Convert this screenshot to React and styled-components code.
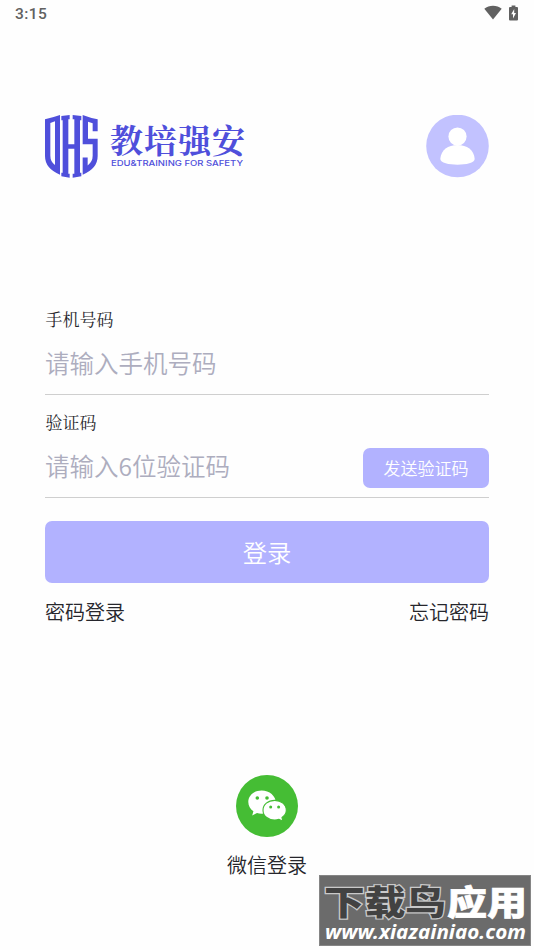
import React from 'react';
import styled, { createGlobalStyle } from 'styled-components';

const GlobalStyle = createGlobalStyle`
  * {
    box-sizing: border-box;
  }

  body {
    margin: 0;
    background: #fefefe;
    font-family: Roboto, "Noto Sans CJK SC", sans-serif;
    color: #26262c;
  }
`;

const WifiIcon = () => (
  <svg width="18" height="15" viewBox="0 0 18 15">
    <path d="M0.3 3.8 C5 -0.2 13 -0.2 17.7 3.8 L9 14.6 Z" fill="#616161" />
  </svg>
);

const BatteryIcon = () => (
  <svg width="9" height="16" viewBox="0 0 9 16">
    <path d="M2.6 0.4 H6.4 V2 H8 Q9 2 9 3 V14.5 Q9 15.5 8 15.5 H1 Q0 15.5 0 14.5 V3 Q0 2 1 2 H2.6 Z" fill="#616161" />
    <path d="M5.2 4 L2.2 9.2 H4 V13.5 L7 8 H5.2 Z" fill="#fff" />
  </svg>
);

const ShieldLogo = () => (
  <svg width="53" height="63" viewBox="30 28 159 190" preserveAspectRatio="none" fill="#4f4fdb">
    <path
      fillRule="evenodd"
      d="M30 41 Q52 36 75 28 V208 Q30 190 30 152 Z M46 52 V151 Q46 169 60 179 V47 Z"
    />
    <path d="M79 31 L104 28 V41 H100 V116 H118 V41 H113 V28 L139 31 V44 H135 V202 H139 V213 L113 217 V205 H118 V130 H100 V205 H104 V217 L79 213 V202 H83 V44 H79 Z" />
    <path d="M143 28 Q166 37 188 41 V77 H173 V53 L159 48 V100 H188 V152 Q188 190 143 208 V156 H158 V180 Q173 169 173 151 V116 H143 Z" />
  </svg>
);

const UserIcon = () => (
  <svg width="63" height="63" viewBox="0 0 63 63">
    <circle cx="31.5" cy="31" r="31.3" fill="#c2c2ff" />
    <circle cx="31.5" cy="21.5" r="9.1" fill="#fff" />
    <path d="M14.3 44 C15 35 22 30.1 31.5 30.1 C41 30.1 48 35 48.7 44 C48.7 51.6 14.3 51.6 14.3 44 Z" fill="#fff" />
  </svg>
);

const WechatIcon = () => (
  <svg width="62" height="62" viewBox="0 0 62 62">
    <circle cx="31" cy="31" r="31" fill="#45bd34" />
    <path d="M25.6 15.5 C18 15.5 12.3 20.5 12.3 27 C12.3 31 14.3 34.1 17.4 36.3 L16.2 40.4 L21 38 Q24 39 28 38.5 L40 28 C39.7 20.8 33.5 15.5 25.6 15.5 Z" fill="#fff" />
    <path d="M38.7 25.4 C32 25.4 27 29.6 27 35.2 C27 40.9 32 45.1 38.7 45.1 Q40.7 45.1 43 44.4 L46.8 46.2 L46 42.5 C48.6 40.7 50.3 38.3 50.3 35.2 C50.3 29.6 45.2 25.4 38.7 25.4 Z" fill="#fff" stroke="#45bd34" strokeWidth="1.1" />
    <g fill="#45bd34">
      <circle cx="21.3" cy="23" r="1.8" />
      <circle cx="31" cy="23" r="1.8" />
      <circle cx="34.7" cy="32" r="1.5" />
      <circle cx="42.6" cy="32" r="1.5" />
    </g>
  </svg>
);

const App = () => {
  return (
    <>
      <GlobalStyle />
      <Screen>
        <StatusBar>
          <Time>3:15</Time>
          <StatusIcons>
            <WifiIcon />
            <BatteryIcon />
          </StatusIcons>
        </StatusBar>
        <Header>
          <Brand>
            <ShieldLogo />
            <BrandText>
              <BrandName>教培强安</BrandName>
              <Slogan viewBox="0 0 134 10">
                <text x="1" y="7.8" textLength="132" lengthAdjust="spacingAndGlyphs">
                  EDU&amp;TRAINING FOR SAFETY
                </text>
              </Slogan>
            </BrandText>
          </Brand>
          <UserIcon />
        </Header>
        <Form>
          <Field>
            <Label>手机号码</Label>
            <InputRow>
              <Input type="tel" placeholder="请输入手机号码" />
            </InputRow>
          </Field>
          <Field>
            <Label>验证码</Label>
            <InputRow>
              <Input placeholder="请输入6位验证码" />
              <SendButton type="button">发送验证码</SendButton>
            </InputRow>
          </Field>
          <LoginButton type="button">登录</LoginButton>
          <Links>
            <TextLink>密码登录</TextLink>
            <TextLink>忘记密码</TextLink>
          </Links>
        </Form>
        <Wechat>
          <WechatIcon />
          <TextLink>微信登录</TextLink>
        </Wechat>
        <Watermark>
          <svg width="212" height="71" viewBox="0 0 212 71">
            <WatermarkName x="5" y="40" textLength="122" lengthAdjust="spacingAndGlyphs" $dark>
              下载鸟
            </WatermarkName>
            <WatermarkName x="128" y="40" textLength="80" lengthAdjust="spacingAndGlyphs">
              应用
            </WatermarkName>
            <WatermarkUrl x="6" y="64" textLength="201" lengthAdjust="spacingAndGlyphs">
              www.xiazainiao.com
            </WatermarkUrl>
          </svg>
        </Watermark>
      </Screen>
    </>
  );
};

const Screen = styled.main`
  position: relative;
  width: 534px;
  height: 950px;
  background: #fefefe;
  overflow: hidden;
`;

const StatusBar = styled.div`
  display: flex;
  justify-content: space-between;
  height: 28px;
  padding: 5px 16px 0 15px;
`;

const Time = styled.span`
  font-size: 15.5px;
  font-weight: 500;
  line-height: 18px;
  letter-spacing: 0.4px;
  color: #616161;
`;

const StatusIcons = styled.div`
  display: flex;
  gap: 7px;
`;

const Header = styled.header`
  display: flex;
  justify-content: space-between;
  height: 151px;
  padding: 87px 45px 0;
`;

const Brand = styled.div`
  display: flex;
  gap: 12px;
`;

const BrandText = styled.div`
  padding-top: 6px;
`;

const BrandName = styled.div`
  height: 37px;
  font-family: "AR PL UKai CN", KaiTi, "Noto Serif CJK SC", "Noto Sans CJK SC", serif;
  font-size: 33px;
  font-weight: 700;
  line-height: 35px;
  letter-spacing: 1px;
  color: #4f4fdb;
`;

const Slogan = styled.svg`
  display: block;
  width: 134px;
  height: 10px;

  text {
    font-family: Inter, sans-serif;
    font-size: 7.8px;
    font-weight: 500;
    fill: #4f4fdb;
  }
`;

const Form = styled.form`
  padding: 122px 45px 0;
`;

const Field = styled.div`
  height: 103px;
  padding-top: 10px;
  border-bottom: 1px solid #cfcfcf;

  &:first-child {
    height: 94px;
    padding-top: 1px;
  }
`;

const Label = styled.div`
  height: 34px;
  padding-left: 0.5px;
  font-family: "Noto Serif CJK SC", "Noto Sans CJK SC", serif;
  font-size: 17px;
  line-height: 34px;
`;

const InputRow = styled.div`
  display: flex;
  justify-content: space-between;
  align-items: center;
  height: 54px;
`;

const Input = styled.input`
  flex: 1;
  min-width: 0;
  height: 40px;
  margin-top: -2px;
  padding: 0;
  border: 0;
  outline: 0;
  background: transparent;
  font-family: "Noto Sans CJK SC", sans-serif;
  font-size: 24.5px;
  font-weight: 350;

  &::placeholder {
    color: #adadbe;
    opacity: 1;
  }
`;

const SendButton = styled.button`
  width: 126px;
  height: 40px;
  margin-top: 4px;
  padding: 0 0 1px;
  border: 0;
  border-radius: 7px;
  background: #b2b2ff;
  font-family: "Noto Sans CJK SC", sans-serif;
  font-size: 17px;
  font-weight: 350;
  color: #fff;
`;

const LoginButton = styled.button`
  display: block;
  width: 100%;
  height: 62px;
  margin-top: 23px;
  padding: 0 0 2px;
  border: 0;
  border-radius: 7px;
  background: #b2b2ff;
  font-family: "Noto Sans CJK SC", sans-serif;
  font-size: 24.3px;
  font-weight: 350;
  color: #fff;
`;

const Links = styled.div`
  display: flex;
  justify-content: space-between;
  margin-top: 14px;
`;

const TextLink = styled.span`
  font-family: "Noto Sans CJK SC", sans-serif;
  font-size: 20px;
  font-weight: 350;
  line-height: 30px;
`;

const Wechat = styled.div`
  display: flex;
  flex-direction: column;
  align-items: center;
  gap: 13px;
  margin-top: 148px;
`;

const Watermark = styled.div`
  position: absolute;
  left: 319px;
  top: 875px;
  width: 212px;
  height: 71px;
  border: 1px solid #858585;
  background: #6b6b6b;

  svg {
    display: block;
    margin: -1px;
  }
`;

const WatermarkName = styled.text`
  font-family: "Noto Sans CJK SC", sans-serif;
  font-size: 34px;
  font-weight: 900;
  fill: ${(props) => (props.$dark ? '#424242' : '#fff')};
  stroke: ${(props) => (props.$dark ? '#c9c9c9' : '#fff')};
  stroke-width: ${(props) => (props.$dark ? '2.4px' : '0.6px')};
  paint-order: stroke;
`;

const WatermarkUrl = styled.text`
  font-family: "Noto Sans", sans-serif;
  font-size: 19px;
  font-style: italic;
  font-weight: 700;
  fill: #fff;
`;

export default App;
